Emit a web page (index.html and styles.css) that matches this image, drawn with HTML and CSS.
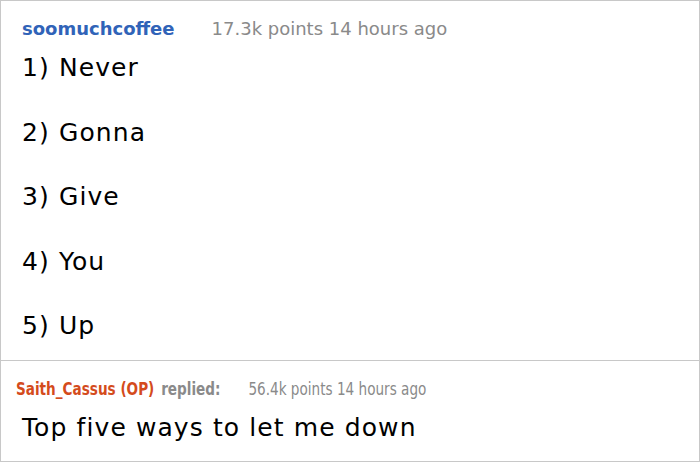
FILE: index.html
```html
<!DOCTYPE html>
<html>
<head>
<meta charset="utf-8">
<link rel="stylesheet" href="styles.css">
</head>
<body>
<div class="thread">
  <div class="comment">
    <div class="meta">
      <span class="author">soomuchcoffee</span>
      <span class="info">17.3k points 14 hours ago</span>
    </div>
    <div class="body">
      <p>1) Never</p>
      <p>2) Gonna</p>
      <p>3) Give</p>
      <p>4) You</p>
      <p>5) Up</p>
    </div>
  </div>
  <div class="reply">
    <div class="meta">
      <span class="author op">Saith_Cassus (OP)</span>
      <span class="replied">replied:</span>
      <span class="info">56.4k points 14 hours ago</span>
    </div>
    <div class="body">
      <p>Top five ways to let me down</p>
    </div>
  </div>
</div>
</body>
</html>
```
FILE: styles.css
```css
html, body {
  margin: 0;
  padding: 0;
  background: #fff;
}
.thread {
  width: 700px;
  height: 462px;
  box-sizing: border-box;
  border: 1px solid #c8c8c8;
  font-family: "DejaVu Sans", Verdana, sans-serif;
  color: #000;
  display: flex;
  flex-direction: column;
  overflow: hidden;
}
.comment {
  padding: 18px 21px 0;
  height: 360px;
  flex: none;
  box-sizing: border-box;
  border-bottom: 1px solid #c8c8c8;
}
.meta {
  font-size: 18px;
  line-height: 20px;
  display: flex;
  align-items: baseline;
  white-space: nowrap;
}
.author {
  color: #3063b8;
  font-weight: bold;
  margin-right: 37px;
}
.info {
  color: #8a8a8a;
}
.body p {
  margin: 0;
  font-size: 25px;
  letter-spacing: 1.1px;
  line-height: 64.5px;
  white-space: nowrap;
}
.comment .body {
  margin-top: -3px;
}
.reply {
  padding: 18px 15px 0;
}
.reply .meta {
  transform: scaleX(0.755);
  transform-origin: left center;
}
.reply .author {
  color: #d44b1c;
  margin-right: 9px;
}
.replied {
  color: #8a8a8a;
  font-weight: bold;
  margin-right: 37px;
}
.reply .body {
  margin-top: -3px;
  padding-left: 6px;
}
```
